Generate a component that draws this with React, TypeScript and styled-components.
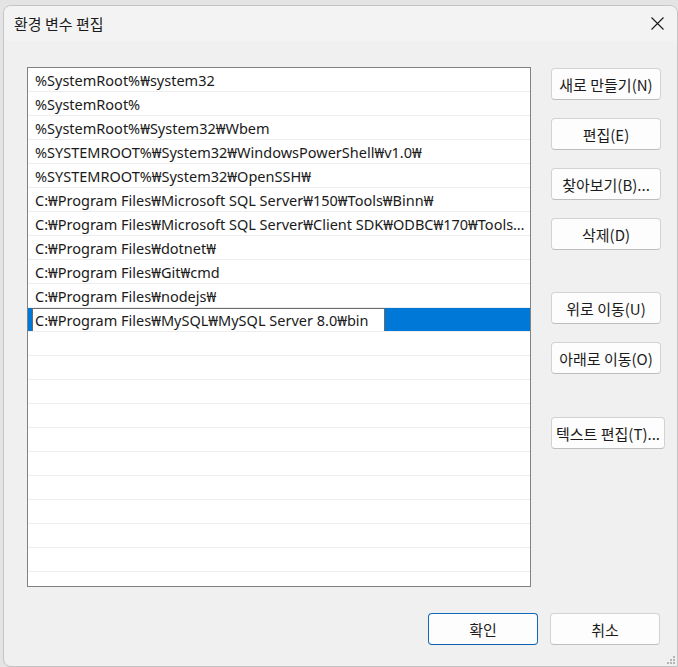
import styled, { createGlobalStyle } from "styled-components";

const GlobalStyle = createGlobalStyle`
  html, body {
    margin: 0;
    padding: 0;
    background: #e4e4e4;
  }
  * {
    box-sizing: border-box;
  }
`;

const FONT = `"Noto Sans", "Noto Sans CJK KR", sans-serif`;
const KFONT = `"Noto Sans CJK KR", "Noto Sans", sans-serif`;

const Screen = styled.div`
  width: 678px;
  height: 667px;
  padding: 5px 0 0 3px;
  overflow: hidden;
`;

const Window = styled.div`
  position: relative;
  width: 675px;
  height: 662px;
  display: flex;
  flex-direction: column;
  background: #f0f0f0;
  border: 1px solid #c4c4c4;
  border-radius: 8px 8px 0 8px;
  overflow: hidden;
`;

const TitleBar = styled.div`
  height: 35px;
  flex-shrink: 0;
  display: flex;
  align-items: center;
  justify-content: space-between;
  padding: 0 12px 0 10px;
  background: #f3f3f3;
`;

const Title = styled.div`
  font-family: ${KFONT};
  font-size: 15px;
  color: #1b1b1b;
`;

const CloseBtn = styled.div`
  width: 16px;
  height: 16px;
  display: flex;
  align-items: center;
  justify-content: center;
`;

const Body = styled.div`
  flex: 1;
  display: flex;
  flex-direction: column;
  padding: 26px 17px 20px 23px;
`;

const Main = styled.div`
  display: flex;
  gap: 20px;
`;

const List = styled.div`
  flex-shrink: 0;
  width: 504px;
  height: 520px;
  border: 1px solid #828282;
  background: #ffffff;
  overflow: hidden;
`;

const Row = styled.div<{ $selected?: boolean }>`
  height: 24px;
  display: flex;
  align-items: center;
  padding-left: 7px;
  border-bottom: 1px solid #ededed;
  background: ${(p) => (p.$selected ? "#0078d7" : "transparent")};
  font-family: ${FONT};
  font-size: 14.5px;
  color: #1a1a1a;
  white-space: nowrap;
  overflow: hidden;
`;

const RowText = styled.span`
  display: block;
  overflow: hidden;
  text-overflow: ellipsis;
  white-space: nowrap;
  padding-right: 2px;
`;

const Editor = styled.div`
  margin-left: -3px;
  width: 353px;
  height: 24px;
  display: flex;
  align-items: center;
  padding-left: 2px;
  background: #ffffff;
  border: 1px solid #6a6a6a;
  white-space: nowrap;
  overflow: hidden;
`;

const Side = styled.div`
  flex-shrink: 0;
  width: 110px;
  display: flex;
  flex-direction: column;
  padding-top: 1px;
`;

const Button = styled.button<{ $gap?: number; $width?: number; $primary?: boolean }>`
  flex-shrink: 0;
  width: ${(p) => p.$width ?? 110}px;
  height: 32px;
  margin-top: ${(p) => p.$gap ?? 0}px;
  padding: 0;
  background: #fdfdfd;
  border: 1px solid ${(p) => (p.$primary ? "#1067bc" : "#d2d2d2")};
  border-bottom-color: ${(p) => (p.$primary ? "#0a5fb0" : "#bdbdbd")};
  border-radius: 4px;
  font-family: ${KFONT};
  font-size: 15px;
  color: #1b1b1b;
  white-space: nowrap;
  overflow: visible;
  display: flex;
  align-items: center;
  justify-content: center;
`;

const Footer = styled.div`
  display: flex;
  justify-content: flex-end;
  gap: 12px;
  margin-top: 26px;
`;

const Grip = styled.svg`
  position: absolute;
  right: 1px;
  bottom: 1px;
`;

const paths = [
  "%SystemRoot%₩system32",
  "%SystemRoot%",
  "%SystemRoot%₩System32₩Wbem",
  "%SYSTEMROOT%₩System32₩WindowsPowerShell₩v1.0₩",
  "%SYSTEMROOT%₩System32₩OpenSSH₩",
  "C:₩Program Files₩Microsoft SQL Server₩150₩Tools₩Binn₩",
  "C:₩Program Files₩Microsoft SQL Server₩Client SDK₩ODBC₩170₩Tools₩Binn₩",
  "C:₩Program Files₩dotnet₩",
  "C:₩Program Files₩Git₩cmd",
  "C:₩Program Files₩nodejs₩",
];

const editing = "C:₩Program Files₩MySQL₩MySQL Server 8.0₩bin";

const sideButtons = [
  { label: "새로 만들기(N)", gap: 0 },
  { label: "편집(E)", gap: 18 },
  { label: "찾아보기(B)...", gap: 18 },
  { label: "삭제(D)", gap: 18 },
  { label: "위로 이동(U)", gap: 42 },
  { label: "아래로 이동(O)", gap: 18 },
  { label: "텍스트 편집(T)...", gap: 43, width: 114 },
];

const App = () => {
  const empty = Array.from({ length: 12 });
  return (
    <Screen>
      <GlobalStyle />
      <Window>
        <TitleBar>
          <Title>환경 변수 편집</Title>
          <CloseBtn>
            <svg width="13" height="13" viewBox="0 0 13 13">
              <path d="M0.5 0.5 L12.5 12.5 M12.5 0.5 L0.5 12.5" stroke="#1a1a1a" strokeWidth="1.1" />
            </svg>
          </CloseBtn>
        </TitleBar>
        <Body>
          <Main>
            <List>
              {paths.map((p) => (
                <Row key={p}>
                  <RowText>{p}</RowText>
                </Row>
              ))}
              <Row $selected>
                <Editor>{editing}</Editor>
              </Row>
              {empty.map((_, i) => (
                <Row key={i} />
              ))}
            </List>
            <Side>
              {sideButtons.map((b) => (
                <Button key={b.label} $gap={b.gap} $width={b.width}>
                  {b.label}
                </Button>
              ))}
            </Side>
          </Main>
          <Footer>
            <Button $primary>확인</Button>
            <Button>취소</Button>
          </Footer>
        </Body>
        <Grip width="12" height="12" viewBox="0 0 12 12">
          {[
            [9, 0],
            [6, 3],
            [9, 3],
            [3, 6],
            [6, 6],
            [9, 6],
          ].map(([x, y]) => (
            <rect key={`${x}-${y}`} x={x} y={y + 3} width="2" height="2" fill="#b4b4b4" />
          ))}
        </Grip>
      </Window>
    </Screen>
  );
};

export default App;
